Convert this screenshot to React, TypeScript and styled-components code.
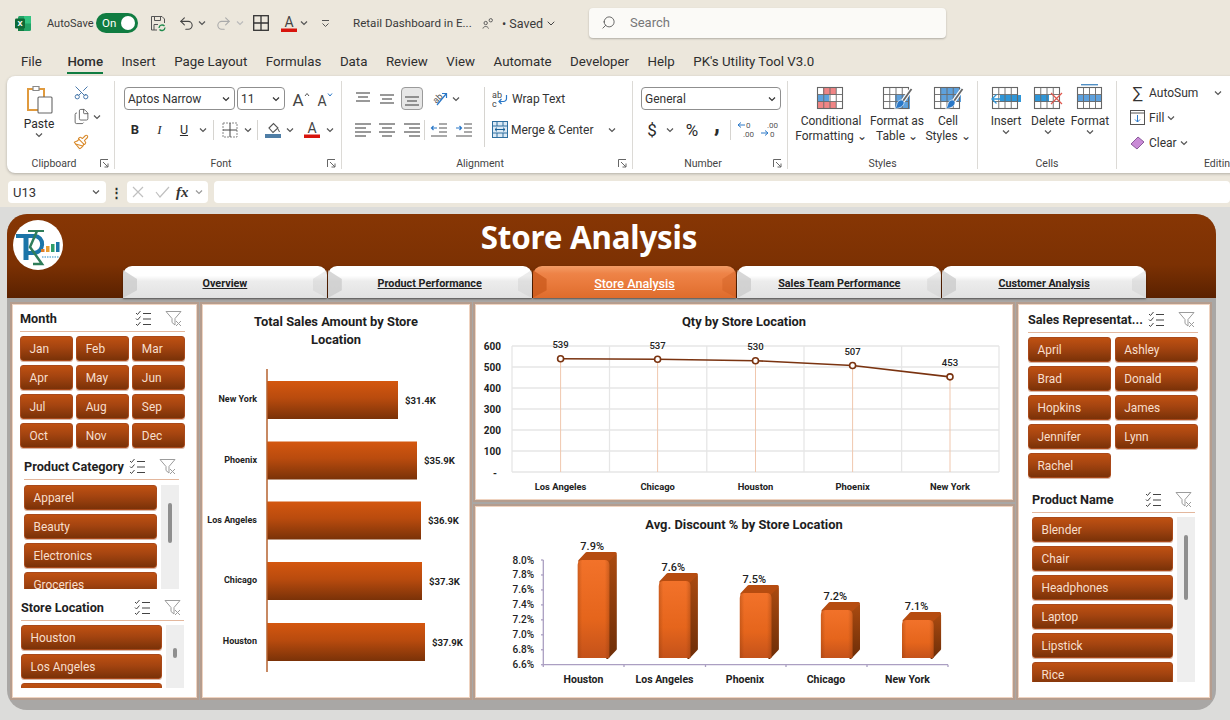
import React from "react";
import styled, { createGlobalStyle } from "styled-components";
import { Scissors, Undo2, Redo2, Search as SearchGlyph, Files, Paintbrush, ChevronDown } from "lucide-react";

const UI = `"Roboto", "Liberation Sans", sans-serif`;

const Global = createGlobalStyle`
  html, body { margin: 0; padding: 0; background: #dcdcda; }
  * { box-sizing: border-box; }
`;

const Page = styled.div`
  width: 1230px; height: 720px; overflow: hidden; position: relative;
  font-family: ${UI}; background: #dcdcda; color: #2b2b2b;
`;
const Chrome = styled.header`
  height: 207px; background: #ece7dc; overflow: hidden;
`;
const TitleBar = styled.div`
  height: 46px; display: flex; align-items: center; padding-left: 15px;
`;
const Slot = styled.div<{ $w: number; $ml?: number; $h?: number }>`
  flex: none; width: ${p => p.$w}px; margin-left: ${p => p.$ml ?? 0}px;
  ${p => (p.$h ? `height:${p.$h}px;` : "")}
  display: flex; align-items: center; justify-content: center;
`;
const BarText = styled.span<{ $w: number; $ml: number; $size?: number }>`
  flex: none; width: ${p => p.$w}px; margin-left: ${p => p.$ml}px;
  font-size: ${p => p.$size ?? 12.5}px; white-space: nowrap; color: #3a3a3a;
`;
const Toggle = styled.div`
  flex: none; width: 42px; height: 20px; margin-left: 7px; border-radius: 10px; background: #107c41;
  display: flex; align-items: center; justify-content: space-between; padding: 0 3px 0 6px;
  color: #fff; font-size: 11.5px;
  &::after { content: ""; width: 14px; height: 14px; border-radius: 50%; background: #fff; }
`;
const SearchBox = styled.div`
  flex: none; width: 357px; height: 30px; margin: -1px 0 0 32px; background: #fbfaf7; border-radius: 4px;
  box-shadow: 0 1px 2px rgba(0,0,0,.25); display: flex; align-items: center; padding-left: 12px; gap: 14px;
  color: #777; font-size: 13px;
`;
const MenuBar = styled.nav`
  height: 30px; display: flex; padding: 7px 0 0 21px; gap: 18.5px;
`;
const MenuItem = styled.span<{ $active?: boolean; $mr?: number }>`
  height: 21px; line-height: 18px; font-size: 13.3px; white-space: nowrap; color: #2e2e2e;
  margin-right: ${p => p.$mr ?? 0}px;
  font-weight: ${p => (p.$active ? 500 : 400)};
  border-bottom: 2.5px solid ${p => (p.$active ? "#107c41" : "transparent")};
`;
const Ribbon = styled.section`
  width: 1260px; height: 97px; margin-left: 7px; padding: 5px 0 0 1px; display: flex; background: #fff;
  border-radius: 8px; box-shadow: 0 1px 3px rgba(0,0,0,.25); font-size: 12px;
`;
const Group = styled.div<{ $w: number; $last?: boolean }>`
  flex: none; width: ${p => p.$w}px; height: 88px; display: flex; flex-direction: column;
  border-right: ${p => (p.$last ? "0" : "1px solid #dcdad6")};
`;
const GroupBody = styled.div<{ $pl?: number; $pt?: number }>`
  flex: 1; min-height: 0; display: flex; padding: ${p => p.$pt ?? 6}px 0 0 ${p => p.$pl ?? 0}px;
`;
const GroupFoot = styled.div`
  height: 11px; display: flex; align-items: center; font-size: 10.5px; color: #444;
`;
const FootLabel = styled.span`
  flex: 1; text-align: center;
`;
const Launcher = styled.span`
  flex: none; width: 14px; display: flex; justify-content: flex-start;
`;
const Col = styled.div<{ $gap?: number; $ml?: number }>`
  display: flex; flex-direction: column; gap: ${p => p.$gap ?? 8}px; margin-left: ${p => p.$ml ?? 0}px;
`;
const Row = styled.div<{ $h?: number; $ml?: number }>`
  display: flex; align-items: center; height: ${p => p.$h ?? 23}px; margin-left: ${p => p.$ml ?? 0}px;
`;
const Combo = styled.div<{ $w: number; $ml?: number }>`
  flex: none; width: ${p => p.$w}px; height: 23px; margin-left: ${p => p.$ml ?? 0}px; border: 1px solid #8f8f8f; border-radius: 4px;
  display: flex; align-items: center; justify-content: space-between; padding: 0 4px 0 3px; font-size: 12px; color: #333;
`;
const VRule = styled.span<{ $h?: number; $mx?: number; $ml?: number }>`
  flex: none; width: 1px; height: ${p => p.$h ?? 20}px; background: #d6d4d0; margin: 0 ${p => p.$mx ?? 0}px;
  ${p => (p.$ml ? `margin-left:${p.$ml}px;` : "")}
`;
const Selected = styled.div`
  flex: none; width: 22px; height: 23px; margin: 0 1px 0 2px; background: #e6e6e6; border: 1px solid #9a9a9a; border-radius: 4px;
  display: flex; align-items: center; justify-content: center;
`;
const PasteCol = styled.div`
  flex: none; width: 44px; margin: 3px 0 0 9px; display: flex; flex-direction: column; align-items: center; font-size: 12px;
  span { margin-top: 3px; line-height: 15px; }
`;
const LineBtn = styled.div<{ $h?: number; $ml?: number }>`
  display: flex; align-items: center; height: ${p => p.$h ?? 23}px; margin-left: ${p => p.$ml ?? 0}px; white-space: nowrap; font-size: 12px; color: #333;
`;
const LineText = styled.span<{ $ml?: number }>`
  margin-left: ${p => p.$ml ?? 4}px;
`;
const Glyph = styled(Slot)<{ $size: number; $weight?: number; $up?: number }>`
  font-size: ${p => p.$size}px; font-weight: ${p => p.$weight ?? 400};
  ${p => (p.$up ? `padding-bottom:${p.$up}px;` : "")}
`;
const BigBtn = styled.div<{ $w: number }>`
  flex: none; width: ${p => p.$w}px; display: flex; flex-direction: column; align-items: center;
  font-size: 12px; line-height: 15px; color: #333; text-align: center; white-space: nowrap;
`;
const BigIcon = styled.div`
  height: 30px; margin-top: -3px; display: flex; align-items: flex-start; justify-content: center;
`;
const FormulaBar = styled.div`
  height: 22px; margin-top: 8px; display: flex; align-items: stretch; padding-left: 8px; font-size: 13px;
`;
const NameBox = styled.div`
  flex: none; width: 98px; background: #fff; border-radius: 4px; display: flex; align-items: center; justify-content: space-between; padding: 0 6px 0 5px; color: #333;
`;
const Dots = styled.div`
  flex: none; width: 21px; display: flex; align-items: center; justify-content: center; font-weight: 700; font-size: 13px;
`;
const FxBox = styled.div`
  flex: none; width: 81px; background: #fff; border-radius: 4px; display: flex; align-items: center; gap: 6px; padding-left: 5px;
  i { font-family: "Liberation Serif", serif; font-weight: 700; font-size: 15px; color: #333; }
`;
const InputBox = styled.div`
  flex: 1; margin-left: 6px; background: #fff; border-radius: 4px;
`;

const Dashboard = styled.main`
  width: 1209px; height: 496px; margin: 7px 0 0 7px; border-radius: 20px; overflow: hidden; background: #a9a7a5;
  display: flex; flex-direction: column;
`;
const Header = styled.div`
  flex: none; height: 84px; display: flex; background: linear-gradient(#873604 0%, #7c3103 60%, #5a2100 100%);
`;
const LogoCol = styled.div`
  flex: none; width: 116px; padding: 6px 0 0 6px;
`;
const LogoBadge = styled.div`
  width: 50px; height: 50px; border-radius: 50%; background: #fff; overflow: hidden;
`;
const HeaderMain = styled.div`
  flex: 1; display: flex; flex-direction: column;
`;
const Title = styled.h1`
  margin: 0; width: 932px; height: 52px; text-align: center; line-height: 47px; font-size: 31.3px; font-weight: 700; color: #fff;
  font-family: "Noto Sans", sans-serif; letter-spacing: -.2px;
`;
const Tabs = styled.div`
  display: flex; gap: 1px;
`;
const Tab = styled.div<{ $active?: boolean }>`
  flex: none; width: 203.8px; height: 32px; border-radius: 9px 9px 0 0; position: relative; display: flex; align-items: center; justify-content: center;
  padding-top: 3px; font-size: ${p => (p.$active ? 12.6 : 10.8)}px; font-weight: ${p => (p.$active ? 500 : 700)}; text-decoration: underline;
  color: ${p => (p.$active ? "#fff" : "#222")};
  background: ${p => p.$active
    ? "linear-gradient(#f39c66 0%, #ee8347 24%, #e97a3c 55%, #df6c2c 100%)"
    : "linear-gradient(#fff 0%, #fff 30%, #ececec 48%, #e2e2e2 100%)"};
  box-shadow: 0 1px 2px rgba(0,0,0,.5);
  &::before, &::after {
    content: ""; position: absolute; top: 4px; bottom: 0; width: 14px;
    background: ${p => (p.$active ? "#c95a1c" : "#c9c9c9")};
  }
  &::before { left: 0; clip-path: polygon(0 0, 100% 32%, 100% 72%, 0 100%); opacity: .75; }
  &::after { right: 0; clip-path: polygon(100% 0, 0 32%, 0 72%, 100% 100%); opacity: .35; }
`;
const Body = styled.div`
  flex: 1; display: grid; grid-template-columns: 185px 268px 538px 192px; grid-template-rows: 196px 192px; column-gap: 5px; row-gap: 6px;
  padding: 6px 0 0 5px; height: 412px;
`;
const Panel = styled.section<{ $column?: number; $span?: boolean }>`
  background: #fff; border: 1px solid #efd3c0; box-shadow: 0 0 0 2px #b59d8e; overflow: hidden; min-width: 0;
  ${p => (p.$column ? `grid-column: ${p.$column};` : "")}
  ${p => (p.$span ? "grid-row: 1 / span 2;" : "")}
`;
const ChartTitle = styled.h2<{ $pt: number }>`
  margin: 0; padding-top: ${p => p.$pt}px; text-align: center; font-size: 12.9px; line-height: 18px; font-weight: 700; color: #1e1e1e;
`;
const ChartSvg = styled.svg`
  display: block;
`;
const Slicer = styled.div<{ $mt: number; $ml: number; $w: number }>`
  width: ${p => p.$w}px; margin: ${p => p.$mt}px 0 0 ${p => p.$ml}px;
`;
const SlicerHead = styled.div`
  height: 26px; display: flex; align-items: center; padding: 0 3px 1px 0; border-bottom: 1.5px solid #e3b79d;
  svg { flex: none; }
`;
const SlicerTitle = styled.span`
  flex: 1; font-size: 12.7px; font-weight: 700; color: #1f1f1f; white-space: nowrap; overflow: hidden;
`;
const SlicerGrid = styled.div<{ $cols: number; $mt: number }>`
  display: grid; grid-template-columns: repeat(${p => p.$cols}, 1fr); gap: 4px 3.5px; margin-top: ${p => p.$mt}px;
`;
const ListWrap = styled.div<{ $h: number; $mt: number }>`
  display: flex; gap: 4px; height: ${p => p.$h}px; margin-top: ${p => p.$mt}px; overflow: hidden;
`;
const List = styled.div`
  flex: 1; display: flex; flex-direction: column; gap: 4px; min-width: 0; overflow: hidden;
`;
const Item = styled.div`
  flex: none; height: 25px; border-radius: 3px; padding-left: 8.5px; display: flex; align-items: center;
  background: linear-gradient(#bf5112 0%, #a44410 45%, #7a3208 100%);
  border: 1px solid #a9491a; font-size: 11.9px; color: #f8dfcc;
  box-shadow: 0 1px 0 rgba(160,80,40,.4);
`;
const Track = styled.div`
  flex: none; width: 18px; background: #eeeeee; display: flex; justify-content: center;
`;
const Thumb = styled.div<{ $top: number; $h: number }>`
  width: 3.5px; border-radius: 2px; background: #8f8f8f; margin-top: ${p => p.$top}px; height: ${p => p.$h}px;
`;

const Chev = ({ c = "#555" }: { c?: string }) => (
  <svg width="8" height="6" viewBox="0 0 8 6"><path d="M1 1.5 4 4.5 7 1.5" fill="none" stroke={c} strokeWidth="1.2" /></svg>
);
const Launch = () => (
  <svg width="9" height="9" viewBox="0 0 9 9" fill="none" stroke="#666" strokeWidth="1"><path d="M.5 8V.5H8M3 3l5 5M8 4.5V8H4.5" /></svg>
);
const ExcelLogo = () => (
  <svg width="16" height="17" viewBox="0 0 16 17">
    <rect x="3" y="1" width="13" height="15" rx="1.5" fill="#21a366" />
    <rect x="9" y="1" width="7" height="7.5" fill="#33c481" />
    <rect x="3" y="8.5" width="6" height="7.5" fill="#107c41" />
    <rect x="0" y="3.5" width="10" height="10" rx="1.2" fill="#0e6a37" />
    <text x="5" y="11.2" fontSize="8" fontWeight="700" fontFamily="Roboto" textAnchor="middle" fill="#fff">X</text>
  </svg>
);
const SaveIcon = () => (
  <svg width="17" height="17" viewBox="0 0 17 17" fill="none" stroke="#555" strokeWidth="1">
    <path d="M1.5 1.5H12L14.5 4V8M1.5 1.5V15H7" /><path d="M4.5 1.5V5.5H10.5V1.5M4 15V9.5H8" />
    <path d="M9 13a3.2 3.2 0 0 1 5.5-2M15 12.5a3.2 3.2 0 0 1-5.5 2" stroke="#1f8a4c" strokeWidth="1.3" />
  </svg>
);
const GridIcon = () => (
  <svg width="16" height="16" viewBox="0 0 16 16" fill="none" stroke="#333" strokeWidth="1.3"><rect x=".7" y=".7" width="14.6" height="14.6" /><path d="M8 .7v14.6M.7 8h14.6" /></svg>
);
const FontColor = () => (
  <svg width="16" height="17" viewBox="0 0 16 17">
    <text x="8" y="12" fontSize="14" fontFamily="Roboto" textAnchor="middle" fill="#444">A</text>
    <rect x="0" y="13.5" width="16" height="3.5" fill="#d8140c" />
  </svg>
);
const GrowA = ({ up }: { up?: boolean }) => (
  <svg width="20" height="22" viewBox="0 0 20 22">
    <text x="7" y="18" fontSize={up ? 17 : 14} fontFamily="Roboto" textAnchor="middle" fill="#444">A</text>
    <path d={up ? "M14 8 16 5.500 18 8" : "M13 5.500 15 8 17 5.500"} fill="none" stroke={up ? "#555" : "#2a78c8"} strokeWidth="1" />
  </svg>
);
const PasteIcon = () => (
  <svg width="28" height="30" viewBox="0 0 28 30" fill="none">
    <path d="M3 5h16v21H3z" fill="#fff" stroke="#e09a3e" strokeWidth="2" />
    <path d="M8 2.5h6v4H8z" fill="#fff" stroke="#888" strokeWidth="1.2" />
    <rect x="13" y="13" width="14" height="16" fill="#fff" stroke="#666" strokeWidth="1.1" rx="1" />
  </svg>
);
const Lines = ({ d }: { d: [number, number, number, string?][] }) => (
  <svg width="18" height="16" viewBox="0 0 18 16" fill="none" strokeWidth="1.2">
    {d.map(([a, b, y, c], i) => <path key={i} d={`M${a} ${y}H${b}`} stroke={c ?? "#555"} />)}
  </svg>
);
const VALIGN = {
  top: [[2, 16, 2], [4, 14, 6], [2, 16, 10]],
  mid: [[2, 16, 4], [4, 14, 8], [2, 16, 12]],
  bot: [[2, 16, 6], [4, 14, 10], [2, 16, 14]],
  left: [[1, 17, 2], [1, 12, 6], [1, 17, 10], [1, 12, 14]],
  center: [[1, 17, 2], [4, 14, 6], [1, 17, 10], [4, 14, 14]],
  right: [[1, 17, 2], [6, 17, 6], [1, 17, 10], [6, 17, 14]],
} as Record<string, [number, number, number, string?][]>;
const IndentIcon = ({ out }: { out?: boolean }) => (
  <svg width="18" height="16" viewBox="0 0 18 16" fill="none" strokeWidth="1.2">
    <path d="M9 2h8M9 6h8M9 10h8M1 14h16" stroke="#555" />
    <path d={out ? "M7 6H1.500M3.500 4 1.500 6l2 2" : "M1 6h5.500M4.500 4l2 2-2 2"} stroke="#2a78c8" />
  </svg>
);
const Orient = () => (
  <svg width="18" height="18" viewBox="0 0 18 18" fill="none">
    <text x="2" y="12" fontSize="9" fontFamily="Roboto" fill="#555" transform="rotate(-45 6 9)">ab</text>
    <path d="M6 15 15 4M11 3.5h4.5V8" stroke="#2a78c8" strokeWidth="1.2" />
  </svg>
);
const BorderIcon = () => (
  <svg width="16" height="16" viewBox="0 0 16 16" fill="none" stroke="#888" strokeWidth="1" strokeDasharray="2 1"><rect x="1" y="1" width="14" height="14" /><path d="M8 1v14M1 8h14" stroke="#444" strokeDasharray="0" /></svg>
);
const FillIcon = () => (
  <svg width="16" height="17" viewBox="0 0 16 17" fill="none">
    <path d="M4 7 8.5 2.5 13 7 8 11.5z" stroke="#555" strokeWidth="1.1" /><path d="M13 8l1.5 3" stroke="#555" />
    <rect y="13" width="16" height="4" fill="#4f7ea6" />
  </svg>
);
const WrapIcon = () => (
  <svg width="16" height="19" viewBox="0 0 16 19" fill="none">
    <text x="0" y="8.5" fontSize="9" fontFamily="Roboto" fill="#444">ab</text>
    <text x="0" y="17.5" fontSize="9" fontFamily="Roboto" fill="#444">c</text>
    <path d="M14.5 6v3.5a3 3 0 0 1-3 3H7M9.5 10 7 12.5 9.5 15" stroke="#2a78c8" strokeWidth="1.2" />
  </svg>
);
const MergeIcon = () => (
  <svg width="16" height="17" viewBox="0 0 16 17" fill="none" stroke="#2f6f9f" strokeWidth="1">
    <rect x=".5" y=".5" width="15" height="16" fill="#dceaf5" /><path d="M.5 5h15M.5 12h15M5 .5V5M11 .5V5M5 12v4.5M11 12v4.5" />
    <path d="M3 8.5h10M5 6.7 3 8.5l2 1.8M11 6.7l2 1.8-2 1.8" stroke="#1a5f94" />
  </svg>
);
const DecimalIcon = ({ inc }: { inc?: boolean }) => (
  <svg width="18" height="18" viewBox="0 0 18 18">
    <text x={inc ? 6 : 9} y="7" fontSize="8" fontFamily="Roboto" fill="#555">{inc ? ".00" : "0"}</text>
    <text x={inc ? 9 : 6} y="16" fontSize="8" fontFamily="Roboto" fill="#555">{inc ? "0" : ".00"}</text>
    <path d={inc ? "M0 12h7M4 9.5 7 12l-3 2.5" : "M8 4H1M4 1.5 1 4l3 2.5"} fill="none" stroke="#2a78c8" strokeWidth="1" />
  </svg>
);
const TableGrid = ({ children, over, w = 29, h = 22 }: { children?: React.ReactNode; over?: React.ReactNode; w?: number; h?: number }) => {
  const x0 = 2.5, y0 = 3.5, gw = w - 4, gh = h - 1;
  const cols = [1, 2, 3].map(i => `M${x0 + (gw * i) / 4} ${y0}V${y0 + gh}`).join("");
  const rows = [1, 2].map(i => `M${x0} ${y0 + (gh * i) / 3}H${x0 + gw}`).join("");
  return (
    <svg width={w + 3} height={h + 6} viewBox={`0 0 ${w + 3} ${h + 6}`} fill="none">
      {children}
      <path d={`${cols}${rows}`} stroke="#6a6a6a" strokeWidth=".9" />
      <rect x={x0} y={y0} width={gw} height={gh} stroke="#666" strokeWidth="1.100" />
      {over}
    </svg>
  );
};
const Brush = () => (
  <g>
    <path d="M30.500 5 22 17" stroke="#fff" strokeWidth="4" />
    <path d="M30.500 5 22 17" stroke="#666" strokeWidth="1.800" />
    <path d="M17 17.500c2.500-2.500 6-1.500 6 1 0 3.500-4 6-9.500 6 2.500-1.500 1.800-4.500 3.500-7z" fill="#2a78c8" stroke="#fff" strokeWidth=".6" />
  </g>
);
const CondIcon = () => (
  <TableGrid>
    <rect x="8" y="4" width="13" height="7" fill="#f08585" />
    <rect x="3" y="11" width="11" height="7" fill="#5ea1dd" />
    <rect x="3" y="18" width="18" height="7" fill="#f08585" />
  </TableGrid>
);
const FmtTable = () => (
  <TableGrid over={<Brush />}><rect x="14" y="11" width="15" height="14" fill="#5ea1dd" /></TableGrid>
);
const CellStyle = () => (
  <TableGrid over={<Brush />}><rect x="8" y="4" width="21" height="14" fill="#5ea1dd" /></TableGrid>
);
const InsertIcon = () => (
  <TableGrid over={<path d="M12 15H2M6.500 10.500 2 15l4.500 4.500" stroke="#2f96d8" strokeWidth="1.300" />}>
    <rect x="10" y="11" width="21" height="7" fill="#2f96d8" />
  </TableGrid>
);
const DeleteIcon = () => (
  <TableGrid over={<path d="M19 9l11 11M30 9 19 20" stroke="#e0564c" strokeWidth="1.200" />}>
    <rect x="3" y="11" width="14" height="7" fill="#2f96d8" />
  </TableGrid>
);
const FormatIcon = () => (
  <TableGrid w={28} over={<path d="M6 .7h17" stroke="#4f8ec4" strokeWidth="1.400" />}>
    <rect x="3" y="11" width="23" height="7" fill="#5ea1dd" />
  </TableGrid>
);
const MultiSelect = () => (
  <svg width="17" height="17" viewBox="0 0 17 17" fill="none" stroke="#444" strokeWidth="1">
    <path d="M1 3l1.500 1.500L5.500 1M1 8.500 2.500 10 5.500 6.500M1 14l1.500 1.500L5.500 12" /><path d="M8 3.500h8M8 9h8M8 14.500h8" strokeWidth="1.2" />
  </svg>
);
const FilterSvg = styled.svg`
  margin-left: 13px;
`;
const ClearFilter = () => (
  <FilterSvg width="17" height="17" viewBox="0 0 17 17" fill="none" stroke="#9c9c9c" strokeWidth="1">
    <path d="M1 1.500h15L10 8.500V15L7 12.500v-4z" /><path d="M11 11l5 5M16 11l-5 5" />
  </FilterSvg>
);
const Logo = () => (
  <svg width="50" height="50" viewBox="0 0 50 50" fill="none">
    <path d="M3 16H21C32 16 32 33 20 33H13" stroke="#1b75a8" strokeWidth="4" />
    <path d="M13 16V40" stroke="#1b75a8" strokeWidth="5" />
    <path d="M15 11H31" stroke="#2f7d5a" strokeWidth="2" />
    <path d="M24 11 17 27 29 44H20" stroke="#2f7d5a" strokeWidth="2.500" />
    <rect x="28" y="29" width="3.500" height="3" fill="#e07b28" />
    <rect x="33" y="26" width="3.500" height="6" fill="#e89c30" />
    <rect x="38" y="24" width="3.500" height="8" fill="#2f9e6a" />
    <rect x="43" y="22" width="3.500" height="10" fill="#1b75a8" />
    <path d="M29 37H46" stroke="#6fb3d8" strokeWidth="1.500" strokeDasharray="1.500 1" />
  </svg>
);

const SlicerHeader = ({ title }: { title: string }) => (
  <SlicerHead><SlicerTitle>{title}</SlicerTitle><MultiSelect /><ClearFilter /></SlicerHead>
);

const BarChart = () => {
  const rows = [
    ["New York", 381, 398, "$31.4K"], ["Phoenix", 441.500, 417, "$35.9K"], ["Los Angeles", 501.500, 421, "$36.9K"],
    ["Chicago", 562, 422, "$37.3K"], ["Houston", 623, 425, "$37.9K"],
  ] as [string, number, number, string][];
  return (
    <ChartSvg width="266" height="348" viewBox="203 349 266 348">
      <defs><linearGradient id="hb" x1="0" y1="0" x2="0" y2="1"><stop offset="0" stopColor="#d4570f" /><stop offset=".45" stopColor="#b94b0e" /><stop offset="1" stopColor="#7a3208" /></linearGradient></defs>
      {rows.map(([n, y, x, v]) => (
        <g key={n} fontFamily={UI} fontWeight="700" fill="#1e1e1e" dominantBaseline="central">
          <text x="257" y={y + 18} textAnchor="end" fontSize="9">{n}</text>
          <rect x="267" y={y} width={x - 267} height="38" fill="url(#hb)" />
          <text x={x + 7} y={y + 19} fontSize="9.600">{v}</text>
        </g>
      ))}
      <path d="M267 369V672" stroke="#b5622f" strokeWidth="1.500" />
    </ChartSvg>
  );
};
const LineChart = () => {
  const xs = [560.600, 657.600, 755.500, 852.600, 950];
  const vals = [539, 537, 530, 507, 453];
  const names = ["Los Angeles", "Chicago", "Houston", "Phoenix", "New York"];
  const yOf = (v: number) => 472 - v * .21;
  return (
    <ChartSvg width="536" height="168" viewBox="476 331 536 168">
      <g stroke="#e6e6e6" strokeWidth="1.300">
        {[0, 100, 200, 300, 400, 500, 600].map(v => <path key={v} d={`M512 ${yOf(v)}H999`} />)}
        {[512, 609.500, 706.800, 804, 901.600, 999].map(x => <path key={x} d={`M${x} 346V472`} />)}
      </g>
      {xs.map((x, i) => <path key={x} d={`M${x} ${yOf(vals[i])}V472`} stroke="#f0c7ae" strokeWidth="1" />)}
      <polyline points={xs.map((x, i) => `${x},${yOf(vals[i])}`).join(" ")} fill="none" stroke="#7a3310" strokeWidth="1.600" />
      {xs.map((x, i) => <circle key={x} cx={x} cy={yOf(vals[i])} r="3" fill="#fff" stroke="#7a3310" strokeWidth="1.600" />)}
      <g fontFamily={UI} fontSize="9.600" fontWeight="500" fill="#222" textAnchor="middle" dominantBaseline="central">
        {xs.map((x, i) => <text key={x} x={x} y={yOf(vals[i]) - 14}>{vals[i]}</text>)}
      </g>
      <g fontFamily={UI} fontSize="10" fontWeight="700" fill="#222" textAnchor="end" dominantBaseline="central">
        {[600, 500, 400, 300, 200, 100].map(v => <text key={v} x="501" y={yOf(v)}>{v}</text>)}
        <text x="497" y="473">-</text>
      </g>
      <g fontFamily={UI} fontSize="9.400" fontWeight="700" fill="#222" textAnchor="middle" dominantBaseline="central">
        {xs.map((x, i) => <text key={x} x={x} y="486">{names[i]}</text>)}
      </g>
    </ChartSvg>
  );
};
const Chart3D = () => {
  const bars = [
    { n: "Houston", x: 577.700, t: 560, v: "7.9%", cx: 583.500 },
    { n: "Los Angeles", x: 658.800, t: 581, v: "7.6%", cx: 664.500 },
    { n: "Phoenix", x: 739.800, t: 593, v: "7.5%", cx: 745 },
    { n: "Chicago", x: 820.900, t: 610, v: "7.2%", cx: 826 },
    { n: "New York", x: 902, t: 620, v: "7.1%", cx: 907.500 },
  ];
  const w = 31.600, dx = 7.500, dy = 8, bot = 658;
  const ticks = ["8.0%", "7.8%", "7.6%", "7.4%", "7.2%", "7.0%", "6.8%", "6.6%"];
  const front = (x: number, t: number) =>
    `M${x} ${bot}V${t + 5}Q${x} ${t} ${x + 5} ${t}H${x + w - 5}Q${x + w} ${t} ${x + w} ${t + 5}V${bot}Z`;
  return (
    <ChartSvg width="536" height="163" viewBox="476 534 536 163">
      <defs>
        <linearGradient id="f3" x1="0" y1="0" x2="0" y2="1"><stop offset="0" stopColor="#f2722a" /><stop offset=".6" stopColor="#e5651c" /><stop offset="1" stopColor="#c4521a" /></linearGradient>
        <linearGradient id="e3" x1="0" y1="0" x2="1" y2="0"><stop offset="0" stopColor="#7a3208" stopOpacity=".3" /><stop offset=".14" stopColor="#7a3208" stopOpacity="0" /><stop offset=".86" stopColor="#7a3208" stopOpacity="0" /><stop offset="1" stopColor="#7a3208" stopOpacity=".3" /></linearGradient>
        <linearGradient id="s3" x1="0" y1="0" x2="0" y2="1"><stop offset="0" stopColor="#a94a10" /><stop offset="1" stopColor="#6e2e08" /></linearGradient>
      </defs>
      <g stroke="#ab9fc2" strokeWidth="1.300" fill="none">
        <path d="M543.300 560V664.700H948" />
        {ticks.map((_, i) => <path key={i} d={`M541 ${560 + i * 14.960}H543.300`} />)}
        {[543.300, 624, 705.500, 786, 867, 948].map(x => <path key={x} d={`M${x} 664.700V667`} />)}
      </g>
      {bars.map(b => (
        <g key={b.n}>
          <path d={`M${b.x + w - 2} ${b.t + 2}L${b.x + w + dx - 1.500} ${b.t - dy + 3}V${bot - dy - 1}L${b.x + w - 2} ${bot - .5}Z`} fill="url(#s3)" stroke="url(#s3)" strokeWidth="3" strokeLinejoin="round" />
          <path d={`M${b.x + 2} ${b.t + 1}L${b.x + dx + 1.500} ${b.t - dy + 1.500}H${b.x + w + dx - 1.500}L${b.x + w - 2} ${b.t + 1}Z`} fill="#b64c10" stroke="#b64c10" strokeWidth="3" strokeLinejoin="round" />
          <path d={front(b.x, b.t)} fill="url(#f3)" />
          <path d={front(b.x, b.t)} fill="url(#e3)" />
          <text x={b.x + 14.500} y={b.t - 14} fontFamily={UI} fontSize="11" fontWeight="500" fill="#222" textAnchor="middle" dominantBaseline="central">{b.v}</text>
          <text x={b.cx} y="679" fontFamily={UI} fontSize="10.500" fontWeight="700" fill="#222" textAnchor="middle" dominantBaseline="central">{b.n}</text>
        </g>
      ))}
      <g fontFamily={UI} fontSize="10" fontWeight="500" fill="#222" textAnchor="end" dominantBaseline="central">
        {ticks.map((t, i) => <text key={t} x="534" y={560 + i * 14.960}>{t}</text>)}
      </g>
    </ChartSvg>
  );
};

const MONTHS = ["Jan", "Feb", "Mar", "Apr", "May", "Jun", "Jul", "Aug", "Sep", "Oct", "Nov", "Dec"];
const REPS = ["April", "Ashley", "Brad", "Donald", "Hopkins", "James", "Jennifer", "Lynn", "Rachel"];
const MENU = ["Insert", "Page Layout", "Formulas", "Data", "Review", "View", "Automate", "Developer", "Help", "PK's Utility Tool V3.0"];
const TABS = ["Overview", "Product Performance", "Store Analysis", "Sales Team Performance", "Customer Analysis"];

export default function App() {
  return (
    <Page>
      <Global />
      <Chrome>
        <TitleBar>
          <Slot $w={16}><ExcelLogo /></Slot>
          <BarText $w={42} $ml={16} $size={11}>AutoSave</BarText>
          <Toggle>On</Toggle>
          <Slot $w={17} $ml={12}><SaveIcon /></Slot>
          <Slot $w={17} $ml={11}><Undo2 size={17} color="#444" strokeWidth={1.5} /></Slot>
          <Slot $w={10} $ml={2}><Chev /></Slot>
          <Slot $w={17} $ml={8}><Redo2 size={17} color="#aaa" strokeWidth={1.5} /></Slot>
          <Slot $w={10} $ml={3}><Chev c="#bbb" /></Slot>
          <Slot $w={16} $ml={8}><GridIcon /></Slot>
          <Slot $w={16} $ml={12}><FontColor /></Slot>
          <Slot $w={10} $ml={2}><Chev /></Slot>
          <Slot $w={10} $ml={11}>
            <svg width="9" height="9" viewBox="0 0 9 9" fill="none" stroke="#555"><path d="M1 1.500h7M1.500 4.500 4.500 7.500 7.500 4.500" /></svg>
          </Slot>
          <BarText $w={120} $ml={23} $size={11.6}>Retail Dashboard in E...</BarText>
          <Slot $w={12} $ml={9}>
            <svg width="13" height="13" viewBox="0 0 13 13" fill="none" stroke="#555"><circle cx="4" cy="6" r="1.800" /><path d="M1 12c.5-3 5.500-3 6 0" /><circle cx="9.500" cy="3" r="1.800" /></svg>
          </Slot>
          <BarText $w={38} $ml={8}>• Saved</BarText>
          <Slot $w={12} $ml={5}><ChevronDown size={13} color="#444" /></Slot>
          <SearchBox><SearchGlyph size={15} color="#555" style={{ transform: "scaleX(-1)" }} strokeWidth={1.4} />Search</SearchBox>
        </TitleBar>
        <MenuBar>
          <MenuItem $mr={7}>File</MenuItem>
          <MenuItem $active>Home</MenuItem>
          {MENU.map(m => <MenuItem key={m}>{m}</MenuItem>)}
        </MenuBar>
        <Ribbon>
          <Group $w={107}>
            <GroupBody $pt={0}>
              <PasteCol><PasteIcon /><span>Paste</span><Chev /></PasteCol>
              <Col $gap={1} $ml={7}>
                <Slot $w={26} $h={22}><Scissors size={17} color="#3b6ea5" strokeWidth={1.3} style={{ transform: "rotate(-90deg)" }} /></Slot>
                <Row $h={25}>
                  <Slot $w={26}><Files size={17} color="#555" strokeWidth={1.2} /></Slot>
                  <Slot $w={10} $ml={-2}><Chev /></Slot>
                </Row>
                <Slot $w={26} $h={24}><Paintbrush size={16} color="#d98a2b" strokeWidth={1.600} /></Slot>
              </Col>
            </GroupBody>
            <GroupFoot><FootLabel>Clipboard</FootLabel><Launcher><Launch /></Launcher></GroupFoot>
          </Group>
          <Group $w={227}>
            <GroupBody $pl={9}>
              <Col>
                <Row>
                  <Combo $w={111}>Aptos Narrow<Chev c="#333" /></Combo>
                  <Combo $w={48} $ml={2}>11<Chev c="#333" /></Combo>
                  <Slot $w={27} $ml={2}><GrowA up /></Slot>
                  <Slot $w={22}><GrowA /></Slot>
                </Row>
                <Row $ml={-1}>
                  <Glyph $w={24} $size={13} $weight={700}>B</Glyph>
                  <Slot $w={25}><i style={{ fontSize: 13, fontFamily: "Liberation Serif" }}>I</i></Slot>
                  <Slot $w={24}><u style={{ fontSize: 12.500 }}>U</u></Slot>
                  <Slot $w={14}><Chev /></Slot>
                  <VRule $mx={3} />
                  <Slot $w={19} $ml={3}><BorderIcon /></Slot>
                  <Slot $w={18}><Chev /></Slot>
                  <VRule />
                  <Slot $w={19} $ml={5}><FillIcon /></Slot>
                  <Slot $w={16}><Chev /></Slot>
                  <Slot $w={20} $ml={4}><FontColor /></Slot>
                  <Slot $w={16}><Chev /></Slot>
                </Row>
              </Col>
            </GroupBody>
            <GroupFoot><FootLabel>Font</FootLabel><Launcher><Launch /></Launcher></GroupFoot>
          </Group>
          <Group $w={291}>
            <GroupBody $pl={9}>
              <Col>
                <Row>
                  <Slot $w={24}><Lines d={VALIGN.top} /></Slot>
                  <Slot $w={24}><Lines d={VALIGN.mid} /></Slot>
                  <Selected><Lines d={VALIGN.bot} /></Selected>
                  <Slot $w={22} $ml={5}><Orient /></Slot>
                  <Slot $w={10}><Chev /></Slot>
                </Row>
                <Row>
                  <Slot $w={24}><Lines d={VALIGN.left} /></Slot>
                  <Slot $w={24}><Lines d={VALIGN.center} /></Slot>
                  <Slot $w={25}><Lines d={VALIGN.right} /></Slot>
                  <VRule />
                  <Slot $w={24} $ml={2}><IndentIcon out /></Slot>
                  <Slot $w={25}><IndentIcon /></Slot>
                </Row>
              </Col>
              <VRule $h={60} $ml={8} />
              <Col $ml={7}>
                <LineBtn><WrapIcon /><LineText>Wrap Text</LineText></LineBtn>
                <LineBtn><MergeIcon /><LineText $ml={3}>Merge &amp; Center</LineText><Slot $w={10} $ml={14}><Chev /></Slot></LineBtn>
              </Col>
            </GroupBody>
            <GroupFoot><FootLabel>Alignment</FootLabel><Launcher><Launch /></Launcher></GroupFoot>
          </Group>
          <Group $w={155}>
            <GroupBody $pl={8}>
              <Col>
                <Combo $w={140}>General<Chev c="#333" /></Combo>
                <Row>
                  <Glyph $w={22} $size={17}>$</Glyph>
                  <Slot $w={14}><Chev /></Slot>
                  <Glyph $w={24} $ml={3} $size={17}>%</Glyph>
                  <Glyph $w={24} $ml={1} $size={24} $weight={700} $up={12}>,</Glyph>
                  <VRule $mx={1} />
                  <Slot $w={22} $ml={3}><DecimalIcon /></Slot>
                  <Slot $w={26}><DecimalIcon inc /></Slot>
                </Row>
              </Col>
            </GroupBody>
            <GroupFoot><FootLabel>Number</FootLabel><Launcher><Launch /></Launcher></GroupFoot>
          </Group>
          <Group $w={190}>
            <GroupBody $pl={2}>
              <BigBtn $w={82}><BigIcon><CondIcon /></BigIcon>Conditional<br />Formatting ⌄</BigBtn>
              <BigBtn $w={50}><BigIcon><FmtTable /></BigIcon>Format as<br />Table ⌄</BigBtn>
              <BigBtn $w={52}><BigIcon><CellStyle /></BigIcon>Cell<br />Styles ⌄</BigBtn>
            </GroupBody>
            <GroupFoot><FootLabel>Styles</FootLabel></GroupFoot>
          </Group>
          <Group $w={139}>
            <GroupBody $pl={7}>
              <BigBtn $w={42}><BigIcon><InsertIcon /></BigIcon>Insert<br /><Chev /></BigBtn>
              <BigBtn $w={42}><BigIcon><DeleteIcon /></BigIcon>Delete<br /><Chev /></BigBtn>
              <BigBtn $w={42}><BigIcon><FormatIcon /></BigIcon>Format<br /><Chev /></BigBtn>
            </GroupBody>
            <GroupFoot><FootLabel>Cells</FootLabel></GroupFoot>
          </Group>
          <Group $w={180} $last>
            <GroupBody $pl={13} $pt={0}>
              <Col $gap={1}>
                <LineBtn $h={23}><Glyph $w={15} $size={17}>∑</Glyph><LineText>AutoSum</LineText><Slot $w={10} $ml={15}><Chev /></Slot></LineBtn>
                <LineBtn $h={25}>
                  <svg width="15" height="15" viewBox="0 0 15 15" fill="none" stroke="#555"><rect x=".5" y=".5" width="14" height="14" /><path d="M.5 3h14" /><path d="M7.500 5v7M5 9.500l2.500 2.500L10 9.500" stroke="#2a78c8" /></svg>
                  <LineText>Fill</LineText><Slot $w={10} $ml={2}><Chev /></Slot>
                </LineBtn>
                <LineBtn $h={24}>
                  <svg width="16" height="15" viewBox="0 0 16 15" fill="#c98bd6" stroke="#8a5a9a"><path d="M1 8 8 1l6 5-7 7z" /></svg>
                  <LineText $ml={3}>Clear</LineText><Slot $w={10} $ml={2}><Chev /></Slot>
                </LineBtn>
              </Col>
            </GroupBody>
            <GroupFoot><Slot $w={40} $ml={83}>Editing</Slot></GroupFoot>
          </Group>
        </Ribbon>
        <FormulaBar>
          <NameBox>U13<Chev /></NameBox>
          <Dots>⋮</Dots>
          <FxBox>
            <svg width="38" height="14" viewBox="0 0 38 14" fill="none" stroke="#c0c0c0" strokeWidth="1.200"><path d="M1 2l10 10M11 2 1 12M24 7l4 5 9-10" /></svg>
            <i>fx</i><Chev c="#999" />
          </FxBox>
          <InputBox />
        </FormulaBar>
      </Chrome>
      <Dashboard>
        <Header>
          <LogoCol><LogoBadge><Logo /></LogoBadge></LogoCol>
          <HeaderMain>
            <Title>Store Analysis</Title>
            <Tabs>{TABS.map((t, i) => <Tab key={t} $active={i === 2}>{t}</Tab>)}</Tabs>
          </HeaderMain>
        </Header>
        <Body>
          <Panel $span>
            <Slicer $mt={1} $ml={7} $w={165}>
              <SlicerHeader title="Month" />
              <SlicerGrid $cols={3} $mt={4}>{MONTHS.map(m => <Item key={m}>{m}</Item>)}</SlicerGrid>
            </Slicer>
            <Slicer $mt={6} $ml={11} $w={155}>
              <SlicerHeader title="Product Category" />
              <ListWrap $h={104} $mt={5}>
                <List>{["Apparel", "Beauty", "Electronics", "Groceries"].map(m => <Item key={m}>{m}</Item>)}</List>
                <Track><Thumb $top={18} $h={40} /></Track>
              </ListWrap>
            </Slicer>
            <Slicer $mt={6} $ml={8} $w={163}>
              <SlicerHeader title="Store Location" />
              <ListWrap $h={63} $mt={4}>
                <List>{["Houston", "Los Angeles", "New York"].map(m => <Item key={m}>{m}</Item>)}</List>
                <Track><Thumb $top={23} $h={10} /></Track>
              </ListWrap>
            </Slicer>
          </Panel>
          <Panel $span>
            <ChartTitle $pt={8}>Total Sales Amount by Store<br />Location</ChartTitle>
            <BarChart />
          </Panel>
          <Panel>
            <ChartTitle $pt={8}>Qty by Store Location</ChartTitle>
            <LineChart />
          </Panel>
          <Panel $column={3}>
            <ChartTitle $pt={9}>Avg. Discount % by Store Location</ChartTitle>
            <Chart3D />
          </Panel>
          <Panel $column={4} $span>
            <Slicer $mt={2} $ml={9} $w={170}>
              <SlicerHeader title="Sales Representat..." />
              <SlicerGrid $cols={2} $mt={4}>{REPS.map(m => <Item key={m}>{m}</Item>)}</SlicerGrid>
            </Slicer>
            <Slicer $mt={9} $ml={13} $w={163}>
              <SlicerHeader title="Product Name" />
              <ListWrap $h={165} $mt={4}>
                <List>{["Blender", "Chair", "Headphones", "Laptop", "Lipstick", "Rice"].map(m => <Item key={m}>{m}</Item>)}</List>
                <Track><Thumb $top={18} $h={65} /></Track>
              </ListWrap>
            </Slicer>
          </Panel>
        </Body>
      </Dashboard>
    </Page>
  );
}
